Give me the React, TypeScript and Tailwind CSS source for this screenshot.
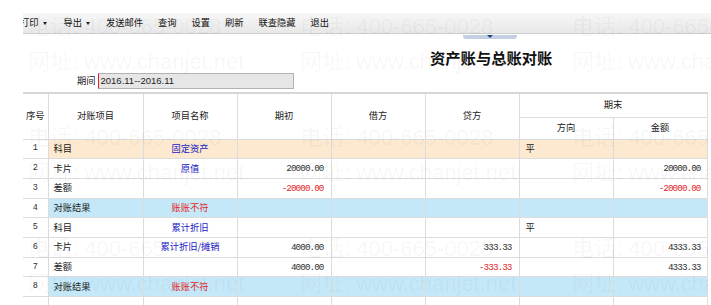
import React from "react";

type Row = {
  no: string;
  item: string;
  name?: string;
  nameColor?: "blue" | "red";
  begin?: string;
  debit?: string;
  credit?: string;
  dir?: string;
  amount?: string;
  bg?: "orange" | "blue";
};

const rows: Row[] = [
  { no: "1", item: "科目", name: "固定资产", nameColor: "blue", dir: "平", bg: "orange" },
  { no: "2", item: "卡片", name: "原值", nameColor: "blue", begin: "20000.00", amount: "20000.00" },
  { no: "3", item: "差额", begin: "-20000.00", amount: "-20000.00" },
  { no: "4", item: "对账结果", name: "账账不符", nameColor: "red", bg: "blue" },
  { no: "5", item: "科目", name: "累计折旧", nameColor: "blue", dir: "平" },
  { no: "6", item: "卡片", name: "累计折旧/摊销", nameColor: "blue", begin: "4000.00", credit: "333.33", amount: "4333.33" },
  { no: "7", item: "差额", begin: "4000.00", credit: "-333.33", amount: "4333.33" },
  { no: "8", item: "对账结果", name: "账账不符", nameColor: "red", bg: "blue" },
  { no: "", item: "" },
];

const toolbar = ["发送邮件", "查询", "设置", "刷新", "联查隐藏", "退出"];

const cjk = "font-['Noto_Sans_CJK_SC',sans-serif]";
const mono = "font-['Liberation_Mono',monospace] tracking-[-0.9px]";

function Num({ v }: { v?: string }) {
  if (!v) return null;
  const neg = v.startsWith("-");
  return <span className={`${mono} ${neg ? "text-[#e0282a]" : "text-[#333]"}`}>{v}</span>;
}

function Caret() {
  return <span className="ml-[4px] inline-block h-0 w-0 border-x-[2.5px] border-t-[3px] border-x-transparent border-t-[#222]" />;
}

function Watermark() {
  const tiles: { x: number; y: number }[] = [];
  for (let j = 0; j < 3; j++) for (let i = 0; i < 3; i++) tiles.push({ x: 28 + i * 272, y: 14 + j * 111 });
  return (
    <div className="pointer-events-none absolute inset-0 overflow-hidden">
      {tiles.map((t, k) => (
        <div
          key={k}
          className="absolute whitespace-nowrap font-['Liberation_Sans','Noto_Sans_CJK_SC',sans-serif] text-[22px] leading-[26px] text-black/[0.045]"
          style={{ left: t.x, top: t.y }}
        >
          <div>电话: 400-665-0028</div>
          <div className="mt-[9px]">网址: www.chanjet.net</div>
        </div>
      ))}
    </div>
  );
}

export default function App() {
  const cell = "border border-[#dcdcdc] p-0";
  return (
    <div className={`relative w-[711px] h-[305px] overflow-hidden bg-white pl-[23px] text-[#222] ${cjk}`}>
      <div className="w-[688px] overflow-hidden pt-[13px]">
        {/* toolbar */}
        <div className="flex h-[21px] items-center border-b border-[#cdcdcd] bg-gradient-to-b from-[#f7f7f7] to-[#e8e8e8] text-[9.25px] text-[#111]">
          <div className="ml-[-3px] flex items-center">
            打印
            <Caret />
          </div>
          <div className="ml-[17px] flex items-center">
            导出
            <Caret />
          </div>
          {toolbar.map((t, i) => (
            <span key={t} className={i === 0 ? "ml-[16px]" : "ml-[15px]"}>
              {t}
            </span>
          ))}
        </div>

        {/* collapse handle */}
        <div className="ml-[440px] mt-px flex h-[4px] w-[54px] items-start justify-center rounded-b-[3px] bg-[#c3d0e2]">
          <div className="h-0 w-0 border-x-[3px] border-t-[3px] border-x-transparent border-t-[#22457f]" />
        </div>

        {/* title */}
        <div className="ml-[407px] mt-[10px] h-[16px] text-[15.3px] font-bold leading-[16px] text-[#111]">资产账与总账对账</div>

        {/* period */}
        <div className="mt-[8px] flex h-[16px] items-center">
          <span className="ml-[54px] text-[9.25px] text-[#222]">期间</span>
          <div className="ml-[2px] flex h-[16px] w-[196px] items-center border border-[#b2b2b2] border-l-[#e02020] bg-[#e6e6e6] pl-[2px] font-['Liberation_Sans',sans-serif] text-[9.5px] text-[#222]">
            2016.11--2016.11
          </div>
        </div>

        {/* table */}
        <table className="mt-[3px] w-[684px] table-fixed border-collapse border-t-2 border-t-[#d6d6d6] text-[9.25px]">
          <colgroup>
            <col className="w-[25px]" />
            <col className="w-[95px]" />
            <col className="w-[94px]" />
            <col className="w-[94px]" />
            <col className="w-[94px]" />
            <col className="w-[94px]" />
            <col className="w-[94px]" />
            <col className="w-[94px]" />
          </colgroup>
          <thead>
            <tr className="h-[24px]">
              <th rowSpan={2} className={`${cell} border-l-0 font-normal`}>序号</th>
              <th rowSpan={2} className={`${cell} font-normal`}>对账项目</th>
              <th rowSpan={2} className={`${cell} font-normal`}>项目名称</th>
              <th rowSpan={2} className={`${cell} font-normal`}>期初</th>
              <th rowSpan={2} className={`${cell} font-normal`}>借方</th>
              <th rowSpan={2} className={`${cell} font-normal`}>贷方</th>
              <th colSpan={2} className={`${cell} font-normal`}>期末</th>
            </tr>
            <tr className="h-[22px]">
              <th className={`${cell} font-normal`}>方向</th>
              <th className={`${cell} font-normal`}>金额</th>
            </tr>
          </thead>
          <tbody>
            {rows.map((r, i) => {
              const bg = r.bg === "orange" ? "bg-[#fde9cf]" : r.bg === "blue" ? "bg-[#c5e8f8]" : "";
              return (
                <tr key={i} className="h-[19.7px]">
                  <td className={`${cell} border-l-0 text-center font-['Liberation_Mono',monospace] text-[8.5px] text-[#333]`}>{r.no}</td>
                  <td className={`${cell} ${bg} pl-[5px]`}>{r.item}</td>
                  <td
                    className={`${cell} ${bg} text-center ${
                      r.nameColor === "red" ? "text-[#e0282a]" : "text-[#2121c4]"
                    }`}
                  >
                    {r.name}
                  </td>
                  <td className={`${cell} ${bg} pr-[7px] text-right`}>
                    <Num v={r.begin} />
                  </td>
                  <td className={`${cell} ${bg} pr-[7px] text-right`}>
                    <Num v={r.debit} />
                  </td>
                  <td className={`${cell} ${bg} pr-[7px] text-right`}>
                    <Num v={r.credit} />
                  </td>
                  <td className={`${cell} ${bg} pl-[6px]`}>{r.dir}</td>
                  <td className={`${cell} ${bg} pr-[6px] text-right`}>
                    <Num v={r.amount} />
                  </td>
                </tr>
              );
            })}
          </tbody>
        </table>
      </div>
      <Watermark />
    </div>
  );
}
